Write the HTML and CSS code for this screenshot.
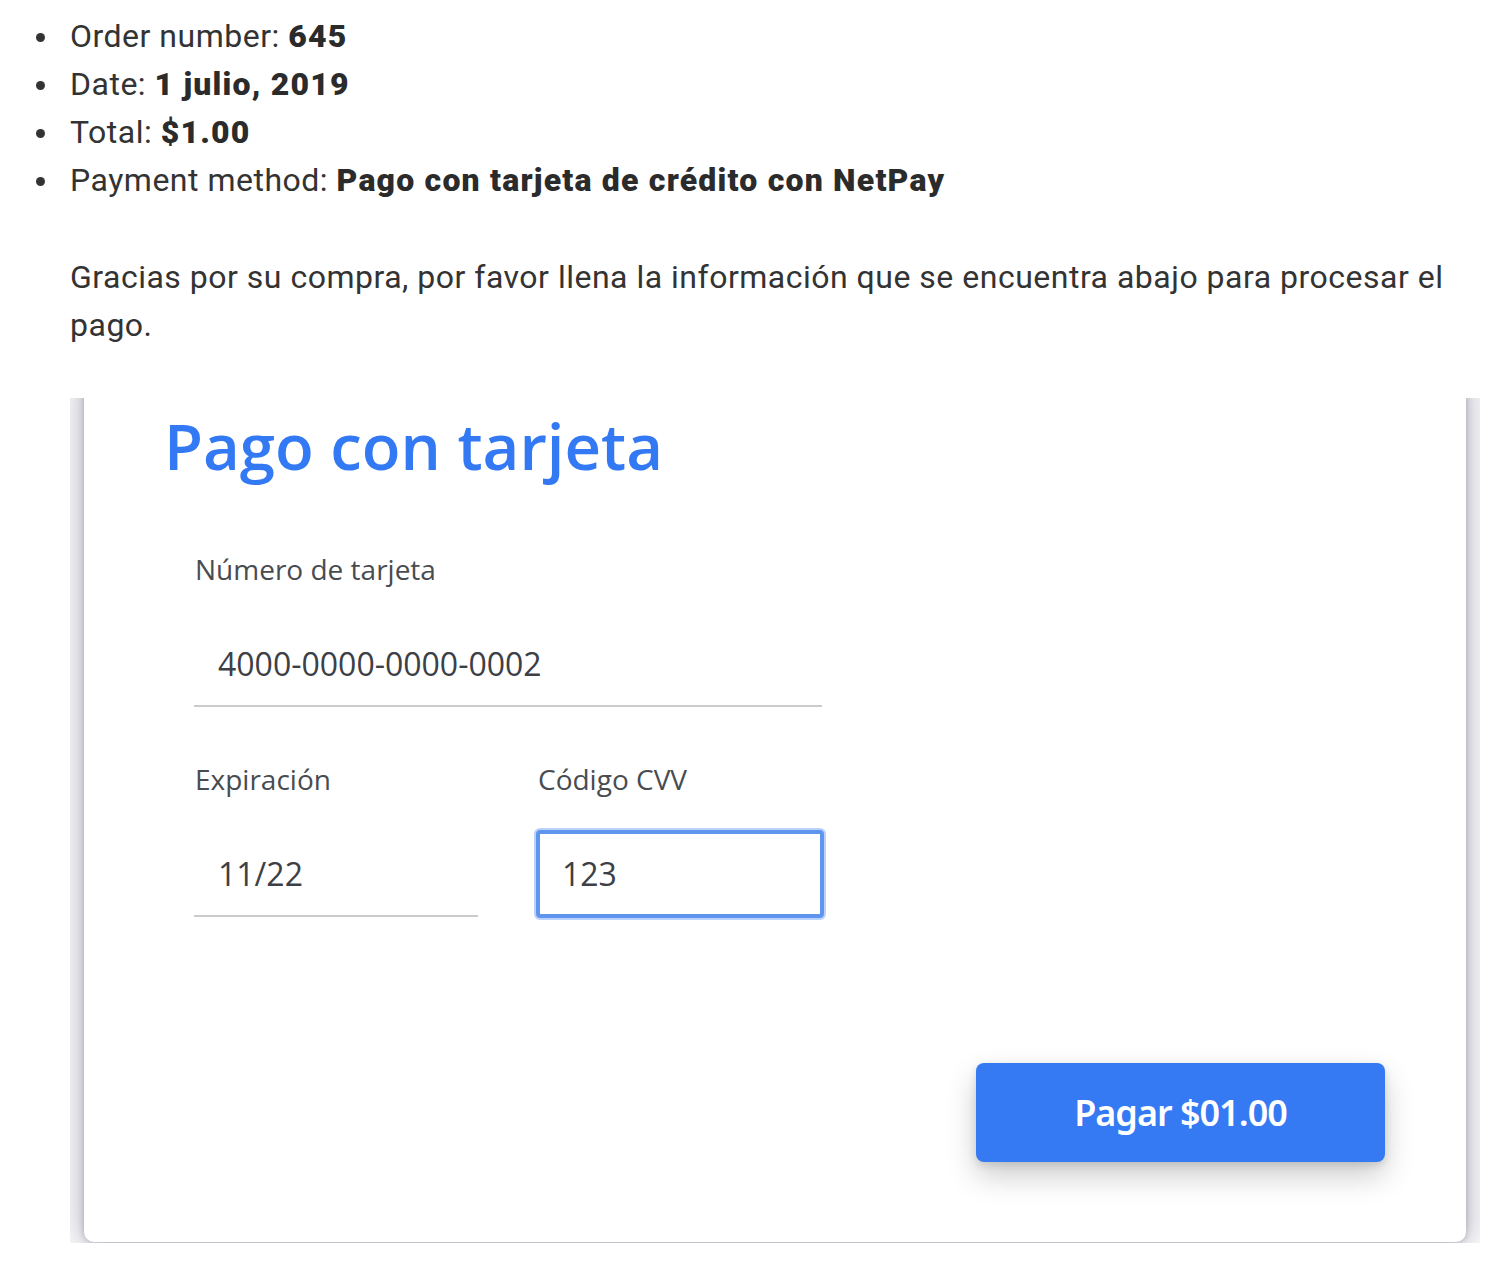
FILE: index.html
```html
<!DOCTYPE html>
<html lang="es">
<head>
<meta charset="utf-8">
<title>Pedido</title>
<link rel="stylesheet" href="styles.css">
</head>
<body>
<div class="page">
  <ul class="order-details">
    <li>Order number: <strong>645</strong></li>
    <li>Date: <strong>1 julio, 2019</strong></li>
    <li>Total: <strong>$1.00</strong></li>
    <li>Payment method: <strong>Pago con tarjeta de crédito con NetPay</strong></li>
  </ul>
  <p class="thanks">Gracias por su compra, por favor llena la información que se encuentra abajo para procesar el pago.</p>
  <div class="frame">
    <div class="card">
      <h1 class="card-title">Pago con tarjeta</h1>
      <form class="form">
        <div class="field field-full">
          <label class="label">Número de tarjeta</label>
          <div class="input">4000-0000-0000-0002</div>
        </div>
        <div class="row">
          <div class="field field-exp">
            <label class="label">Expiración</label>
            <div class="input">11/22</div>
          </div>
          <div class="field field-cvv">
            <label class="label">Código CVV</label>
            <div class="input input-focus">123</div>
          </div>
        </div>
        <div class="actions">
          <button type="button" class="pay-btn">Pagar $01.00</button>
        </div>
      </form>
    </div>
  </div>
</div>
</body>
</html>
```

FILE: styles.css
```css
html, body {
  margin: 0;
  padding: 0;
  background: #ffffff;
}

.page {
  width: 1410px;
  margin-left: 70px;
  padding-top: 12px;
  font-family: Roboto, "Liberation Sans", sans-serif;
  font-size: 32px;
  line-height: 48px;
  color: #333333;
  letter-spacing: 0.5px;
}

.order-details {
  margin: 0;
  padding-left: 0;
  list-style: none;
}

.order-details li {
  margin: 0;
}

.order-details li::before {
  content: "";
  display: inline-block;
  width: 9px;
  height: 9px;
  border-radius: 50%;
  background: #333333;
  margin-left: -34px;
  margin-right: 25px;
  vertical-align: middle;
  position: relative;
  top: -1px;
}

.order-details strong {
  font-weight: 900;
  color: #2b2b2b;
  letter-spacing: 1.2px;
}

.thanks {
  margin: 49px 0;
}

.frame {
  height: 845px;
  overflow: hidden;
  padding: 0 14px;
  background: #ffffff;
}

.card {
  margin-top: -20px;
  box-sizing: border-box;
  height: 864px;
  background: #ffffff;
  border-radius: 10px;
  box-shadow: 0 0 30px 6px rgba(50, 50, 93, 0.32), 0 0 6px rgba(0, 0, 0, 0.22);
  padding: 31px 81px 0 80px;
  font-family: "Open Sans", "Noto Sans", sans-serif;
  letter-spacing: 0;
  display: flex;
  flex-direction: column;
}

.card-title {
  margin: 0;
  font-size: 63.5px;
  line-height: 74px;
  font-weight: 600;
  color: #3479f4;
}

.form {
  margin-top: 67px;
  padding-left: 30px;
  display: flex;
  flex-direction: column;
}

.field {
  display: flex;
  flex-direction: column;
}

.field-full {
  width: 628px;
}

.label {
  font-size: 28px;
  line-height: 38px;
  color: #484c51;
  padding-left: 1px;
}

.input {
  margin-top: 31px;
  height: 83px;
  padding-top: 3px;
  border-bottom: 2px solid #cbcbcb;
  box-sizing: content-box;
  padding-left: 24px;
  font-size: 32px;
  line-height: 83px;
  color: #3c4046;
}

.row {
  margin-top: 53px;
  display: flex;
  gap: 58px;
}

.field-exp {
  width: 284px;
}

.field-cvv {
  width: 288px;
}

.field-cvv .label {
  padding-left: 2px;
}

.input-focus {
  margin-top: 32px;
  height: 80px;
  padding-top: 0;
  line-height: 80px;
  border: 4px solid #5f95ef;
  border-radius: 4px;
  box-shadow: 0 0 0 2px rgba(130, 175, 245, 0.55);
  padding-left: 22px;
}

.actions {
  margin-top: 145px;
  display: flex;
  justify-content: flex-end;
}

.pay-btn {
  width: 409px;
  height: 99px;
  border: none;
  border-radius: 8px;
  background: #3579f3;
  color: #ffffff;
  font-family: "Noto Sans", "Open Sans", sans-serif;
  font-size: 36px;
  font-weight: 600;
  letter-spacing: -1px;
  box-shadow: 0 14px 30px rgba(0, 0, 0, 0.2), 0 3px 8px rgba(0, 0, 0, 0.12);
  cursor: pointer;
}
```
